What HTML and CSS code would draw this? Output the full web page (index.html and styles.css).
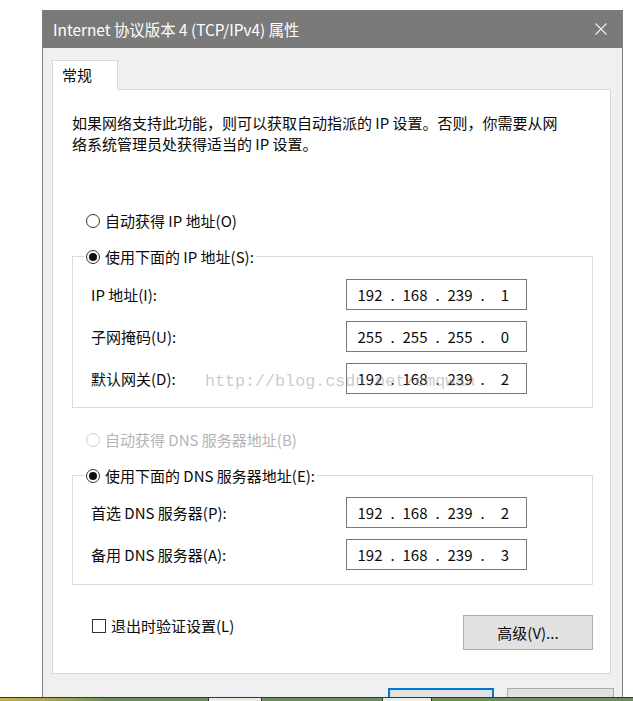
FILE: index.html
```html
<!DOCTYPE html>
<html lang="zh-CN">
<head>
<meta charset="utf-8">
<title>Internet 协议版本 4 (TCP/IPv4) 属性</title>
<link rel="stylesheet" href="styles.css">
</head>
<body>
<div class="screen">
  <div class="window">
    <div class="titlebar">
      <span class="title">Internet 协议版本 4 (TCP/IPv4) 属性</span>
      <svg class="close" width="12" height="12" viewBox="0 0 12 12"><path d="M0.5 0.5 L11.5 11.5 M11.5 0.5 L0.5 11.5" stroke="#f2f2f2" stroke-width="1.1" fill="none"/></svg>
    </div>
    <div class="client">
      <div class="tabs"><div class="tab">常规</div></div>
      <div class="panel">
        <p class="desc">如果网络支持此功能，则可以获取自动指派的 IP 设置。否则，你需要从网<br>络系统管理员处获得适当的 IP 设置。</p>

        <div class="option auto-ip"><span class="radio"></span><span class="opt-text">自动获得 IP 地址(O)</span></div>
        <fieldset class="group ip-group">
          <legend class="option"><span class="radio checked"></span><span class="opt-text">使用下面的 IP 地址(S):</span></legend>
          <div class="fields">
            <span class="label">IP 地址(I):</span>
            <div class="ipbox"><span class="oct">192</span><span class="dot">.</span><span class="oct">168</span><span class="dot">.</span><span class="oct">239</span><span class="dot">.</span><span class="oct">1</span></div>
            <span class="label">子网掩码(U):</span>
            <div class="ipbox"><span class="oct">255</span><span class="dot">.</span><span class="oct">255</span><span class="dot">.</span><span class="oct">255</span><span class="dot">.</span><span class="oct">0</span></div>
            <span class="label">默认网关(D):</span>
            <div class="ipbox"><span class="oct">192</span><span class="dot">.</span><span class="oct">168</span><span class="dot">.</span><span class="oct">239</span><span class="dot">.</span><span class="oct">2</span></div>
          </div>
        </fieldset>

        <div class="option auto-dns disabled"><span class="radio"></span><span class="opt-text">自动获得 DNS 服务器地址(B)</span></div>
        <fieldset class="group dns-group">
          <legend class="option"><span class="radio checked"></span><span class="opt-text">使用下面的 DNS 服务器地址(E):</span></legend>
          <div class="fields">
            <span class="label">首选 DNS 服务器(P):</span>
            <div class="ipbox"><span class="oct">192</span><span class="dot">.</span><span class="oct">168</span><span class="dot">.</span><span class="oct">239</span><span class="dot">.</span><span class="oct">2</span></div>
            <span class="label">备用 DNS 服务器(A):</span>
            <div class="ipbox"><span class="oct">192</span><span class="dot">.</span><span class="oct">168</span><span class="dot">.</span><span class="oct">239</span><span class="dot">.</span><span class="oct">3</span></div>
          </div>
        </fieldset>

        <div class="footer-row">
          <div class="check"><span class="box"></span><span class="opt-text">退出时验证设置(L)</span></div>
          <button class="btn adv">高级(V)...</button>
        </div>
      </div>
      <div class="buttons">
        <button class="btn ok">确定</button>
        <button class="btn cancel">取消</button>
      </div>
    </div>
  </div>
  <div class="taskbar">
    <span class="tb-glow"></span>
    <span class="tb-item one"></span>
    <span class="tb-item two"></span>
  </div>
  <div class="watermark">http://blog.csdn.net/cmqwan</div>
</div>
</body>
</html>
```
FILE: styles.css
```css
* { box-sizing: border-box; }
html, body { margin: 0; padding: 0; background: #fff; }
body {
  font-family: "Noto Sans CJK SC", "Noto Sans", sans-serif;
  font-size: 15px;
  color: #0a0a0a;
}
.screen {
  position: relative;
  width: 633px;
  height: 701px;
  overflow: hidden;
  background: #fff;
}
.window {
  margin: 10px 0 0 42px;
  width: 581px;
  height: 687px;
  overflow: hidden;
  background: #f0f0f0;
  border-left: 1px solid #808080;
  border-right: 1px solid #808080;
}
.titlebar {
  height: 38px;
  background: #7a7a7a;
  display: flex;
  align-items: center;
  justify-content: space-between;
  padding: 0 15px 0 10px;
}
.title {
  color: #fff;
  font-size: 15.4px;
  line-height: 38px;
  white-space: nowrap;
}
.close { display: block; }
.client {
  padding: 12px 0 0 9px;
}
.tabs { display: flex; }
.tab {
  position: relative;
  z-index: 1;
  width: 66px;
  height: 30px;
  margin-bottom: -1px;
  background: #fff;
  border: 1px solid #d9d9d9;
  border-bottom: none;
  padding-left: 9px;
  line-height: 28px;
  font-size: 15px;
}
.panel {
  width: 559px;
  height: 585px;
  background: #fff;
  border: 1px solid #d9d9d9;
  padding: 22px 0 0 19px;
}
.desc {
  margin: 0;
  line-height: 21px;
  white-space: nowrap;
}
.option {
  display: flex;
  align-items: center;
  height: 21px;
  line-height: 21px;
  white-space: nowrap;
}
.auto-ip { margin-top: 56px; padding-left: 14px; }
.auto-dns { margin-top: 21px; padding-left: 14px; }
.disabled { color: #b4b4b4; }
.radio {
  width: 14px;
  height: 14px;
  border: 1px solid #333;
  border-radius: 50%;
  background: #fff;
  margin-right: 5px;
  display: flex;
  align-items: center;
  justify-content: center;
  flex: none;
}
.disabled .radio { border-color: #cfcfcf; }
.radio.checked::after {
  content: "";
  width: 8px;
  height: 8px;
  border-radius: 50%;
  background: #111;
}
.group {
  margin: 15px 0 0 0;
  width: 521px;
  border: 1px solid #dcdcdc;
  padding: 12px 0 13px 0;
}
.group legend {
  margin-left: 12px;
  padding: 0 2px 0 1px;
}
.dns-group { padding-top: 11px; padding-bottom: 14px; }
.fields {
  display: grid;
  grid-template-columns: 255px 181px;
  row-gap: 11px;
  align-items: center;
  padding-left: 18px;
}
.label { line-height: 21px; white-space: nowrap; }
.ipbox {
  height: 31px;
  border: 1px solid #7a7a7a;
  background: #fff;
  display: flex;
  align-items: center;
  padding-left: 6px;
  font-size: 15px;
}
.oct { width: 34px; text-align: center; }
.dot { width: 11px; text-align: center; }
.footer-row {
  width: 521px;
  margin-top: 30px;
  display: flex;
  justify-content: space-between;
  align-items: flex-start;
}
.check {
  display: flex;
  align-items: center;
  height: 21px;
  padding-left: 20px;
  white-space: nowrap;
}
.box {
  width: 14px;
  height: 14px;
  border: 1px solid #333;
  background: #fff;
  margin-right: 5px;
  flex: none;
}
.btn {
  font-family: inherit;
  font-size: 15px;
  color: #0a0a0a;
  background: #e1e1e1;
  border: 1px solid #adadad;
  padding: 0;
}
.adv { width: 130px; height: 35px; }
.buttons {
  display: flex;
  justify-content: flex-end;
  gap: 13px;
  padding-right: 8px;
  margin-top: 14px;
}
.ok { width: 106px; height: 34px; border: 2px solid #0078d7; }
.cancel { width: 107px; height: 34px; }
.taskbar {
  position: relative;
  height: 4px;
  border-top: 1px solid #2f3a2a;
  background: #6f8d5e;
}
.tb-glow {
  position: absolute;
  left: 0; top: 0;
  width: 110px; height: 3px;
  background: linear-gradient(90deg, #c9b04a, #9aa352 60%, rgba(111,141,94,0));
}
.tb-item {
  position: absolute;
  top: 0;
  height: 3px;
  background: #e8ece4;
  border-left: 1px solid #333;
  border-right: 1px solid #333;
}
.tb-item.one { left: 208px; width: 54px; }
.tb-item.two { left: 382px; width: 50px; }
.watermark {
  position: absolute;
  left: 205px;
  top: 371px;
  font-family: "Liberation Mono", monospace;
  font-size: 16.7px;
  line-height: 22px;
  color: rgba(150, 150, 150, 0.5);
  white-space: nowrap;
  pointer-events: none;
}
```
